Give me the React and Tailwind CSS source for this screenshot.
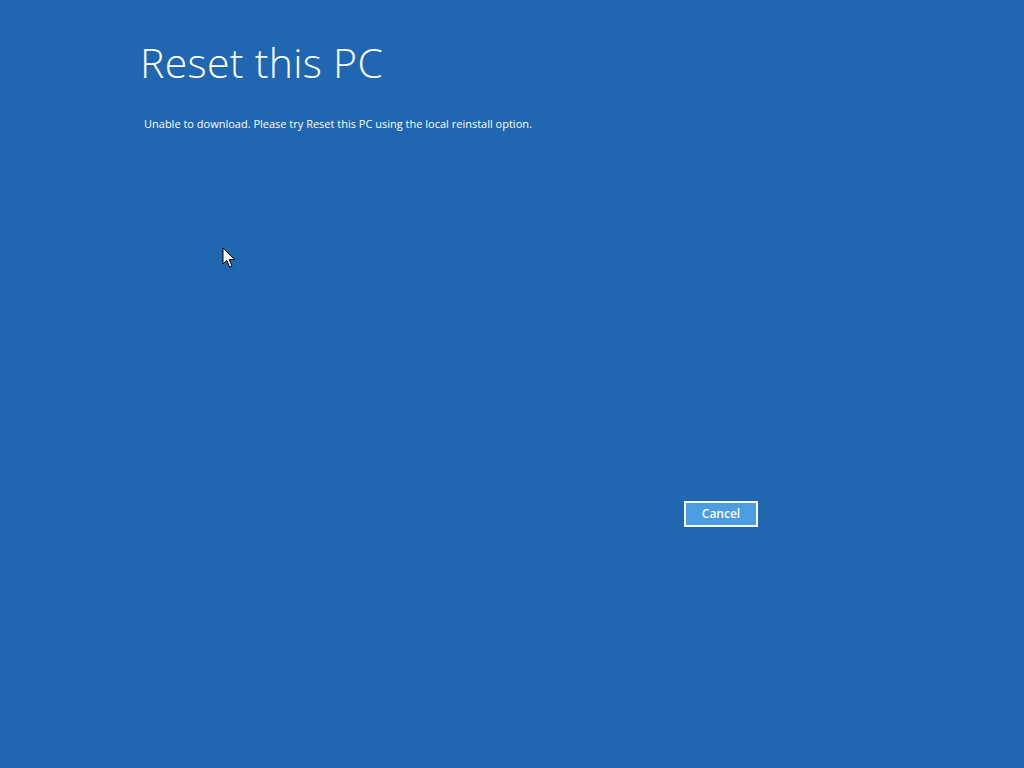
const Cursor = () => (
  <svg
    className="absolute left-[222px] top-[247px]"
    width="14"
    height="22"
    viewBox="0 0 14 22"
  >
    <path
      d="M1 1 L1 17 L4.8 13.4 L7.6 20 L10 19 L7.3 12.6 L12.5 12.6 Z"
      fill="#fff"
      stroke="#000"
      strokeWidth="1"
      strokeLinejoin="miter"
    />
  </svg>
);

export default function App() {
  return (
    <div className="relative w-[1024px] h-[768px] bg-[#2066b1] text-white font-['Open_Sans',sans-serif] overflow-hidden">
      <div className="flex flex-col pl-[140px] pt-[36px]">
        <h1 className="text-[41px] font-light leading-[52px] tracking-[0.3px]">
          Reset this PC
        </h1>
        <p className="mt-[28px] ml-[4px] text-[11px] leading-[16px]">
          Unable to download. Please try Reset this PC using the local reinstall option.
        </p>
      </div>
      <div className="flex pl-[684px] mt-[369px]">
        <button className="w-[74px] h-[26px] border-2 border-white bg-[#4a9de0] text-[12px] font-semibold text-white leading-none">
          Cancel
        </button>
      </div>
      <Cursor />
    </div>
  );
}
